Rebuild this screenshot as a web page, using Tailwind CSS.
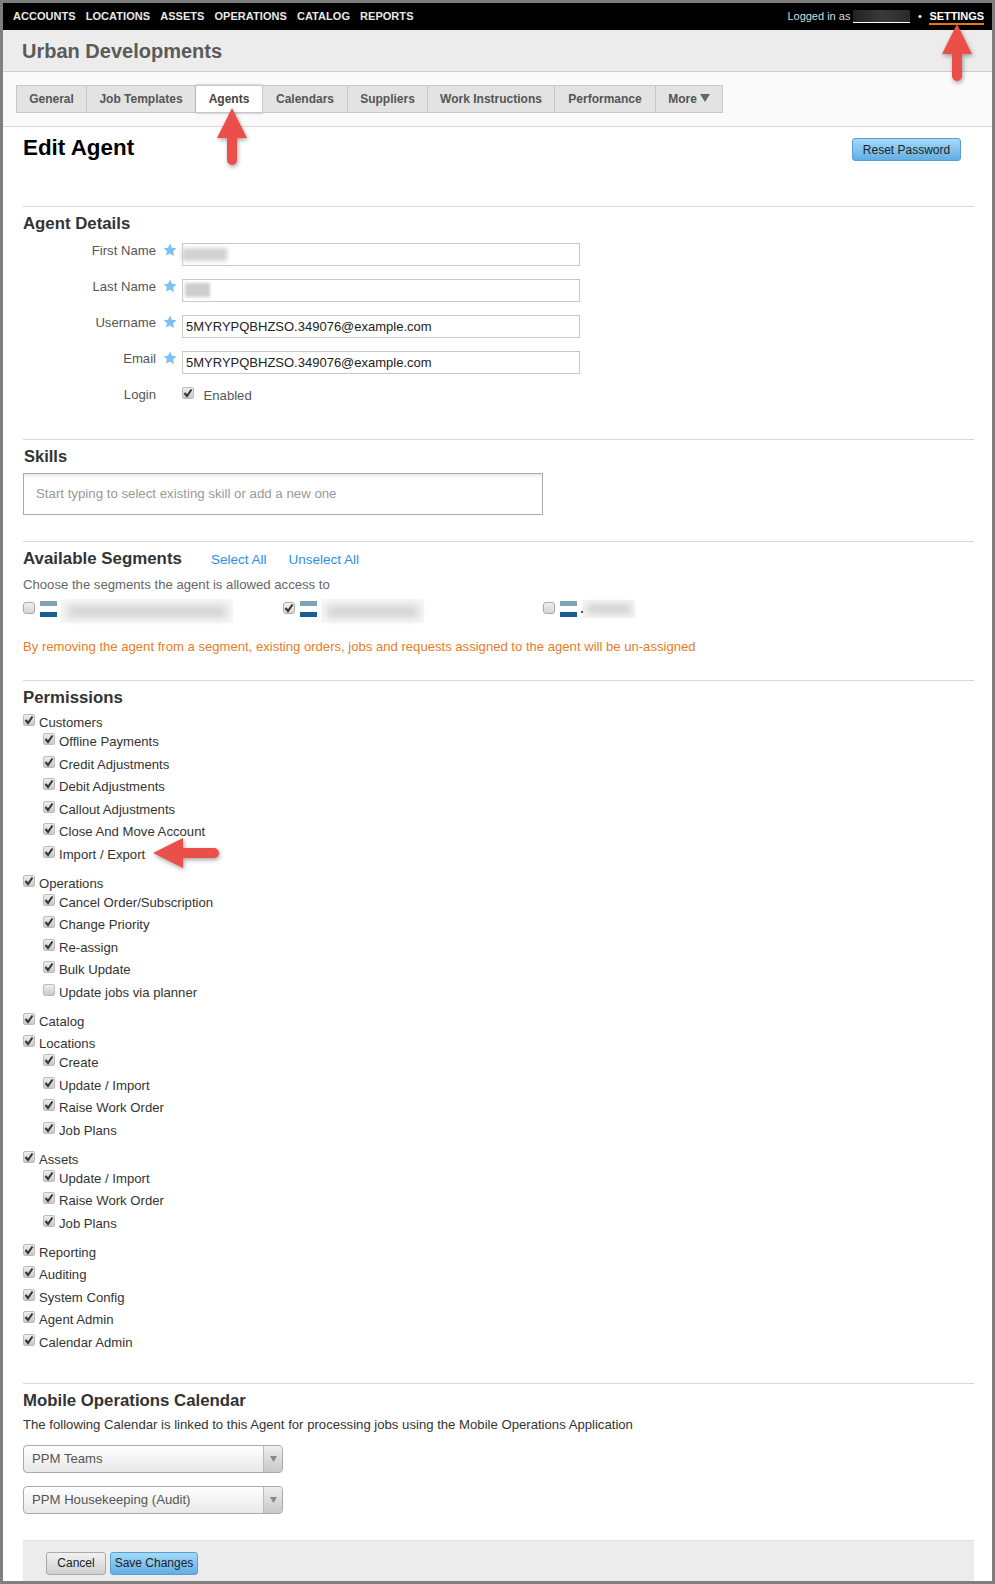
<!DOCTYPE html>
<html lang="en">
<head>
    <meta charset="UTF-8">
    <title>Edit Agent</title>
    <script src="https://cdn.jsdelivr.net/npm/@tailwindcss/browser@4"></script>
</head>
<body class="bg-white font-['Liberation_Sans',Arial,sans-serif] text-[13.15px] text-[#444]">
<div class="relative w-[995px] h-[1584px] border-[3px] border-[#7f7f7f] bg-white overflow-hidden">

    <!-- Top bar -->
    <div class="flex items-center justify-between h-[27px] bg-black pl-[10px] pr-[8px] text-[11px] text-[#e8e8e8]">
        <div class="flex gap-[10px] font-bold tracking-[0.05px]">
            <span>ACCOUNTS</span><span>LOCATIONS</span><span>ASSETS</span><span>OPERATIONS</span><span>CATALOG</span><span>REPORTS</span>
        </div>
        <div class="flex items-center">
            <span class="text-[#ddd]">Logged in as</span>
            <span class="ml-[3px] w-[57px] h-[13px] bg-gradient-to-r from-[#222] via-[#3a3a3a] to-[#2a2a2a] border-b border-white"></span>
            <span class="w-[19px] text-center text-white">•</span>
            <span class="font-bold text-white border-b-2 border-[#e07b10] leading-[14px] h-[16px] tracking-[-0.05px]">SETTINGS</span>
        </div>
    </div>

    <!-- Company header -->
    <div class="h-[42px] bg-[#ececec] border-b border-[#cfcfcf] pl-[19px] flex items-center">
        <span class="text-[20px] font-bold text-[#5a5a5a]">Urban Developments</span>
    </div>

    <!-- Tabs -->
    <div class="h-[55px] bg-[#fafafa] border-b border-[#dcdcdc] pl-[13px] pt-[13px]">
        <div class="flex h-[28px] text-[12px] font-bold text-[#555]">
            <a class="flex items-center justify-center w-[71px] bg-[#e3e3e3] border border-[#c8c8c8]">General</a>
            <a class="flex items-center justify-center w-[109px] bg-[#e3e3e3] border border-l-0 border-[#c8c8c8]">Job Templates</a>
            <a class="flex items-center justify-center w-[67px] bg-white border border-l-0 border-[#c8c8c8] shadow-[0_0_2px_#999] text-[#444]">Agents</a>
            <a class="flex items-center justify-center w-[85px] bg-[#e3e3e3] border border-l-0 border-[#c8c8c8]">Calendars</a>
            <a class="flex items-center justify-center w-[80px] bg-[#e3e3e3] border border-l-0 border-[#c8c8c8]">Suppliers</a>
            <a class="flex items-center justify-center w-[127px] bg-[#e3e3e3] border border-l-0 border-[#c8c8c8]">Work Instructions</a>
            <a class="flex items-center justify-center w-[101px] bg-[#e3e3e3] border border-l-0 border-[#c8c8c8]">Performance</a>
            <a class="flex items-center justify-center w-[67px] bg-[#e3e3e3] border border-l-0 border-[#c8c8c8]">More
                <svg class="ml-[3px] mb-[2px]" width="10" height="8" viewBox="0 0 10 8"><path d="M0 0h10L5 8z" fill="#666"/></svg>
            </a>
        </div>
    </div>

    <!-- Content -->
    <div class="pl-[20px] pr-[18px]">
        <div class="flex justify-between h-[79px]">
            <h1 class="text-[22.4px] font-bold text-black mt-[5px] leading-[32px]">Edit Agent</h1>
            <button class="mt-[11px] mr-[13px] w-[109px] h-[23px] pt-[1px] rounded-[3px] border border-[#5a9fd0] bg-gradient-to-b from-[#a3dafb] to-[#62aee2] text-[12px] text-[#222]">Reset Password</button>
        </div>

        <!-- Agent Details -->
        <section class="border-t border-[#d8d8d8] h-[233px]">
            <h2 class="text-[16.8px] font-bold text-[#333] mt-[7px] leading-[20px]">Agent Details</h2>
            <div class="mt-[9px] flex flex-col">
                <div class="flex h-[36px]">
                    <label class="w-[133px] -mt-[1.5px] text-right leading-[17px] text-[#555]">First Name</label>
                    <svg class="ml-[7px]" width="14" height="14" viewBox="0 0 24 24"><path d="M12 1l3.4 7.2 7.6 1-5.6 5.4 1.4 7.9L12 17.8l-6.8 3.7 1.4-7.9L1 9.2l7.6-1z" fill="#7cc0f5"/></svg>
                    <div class="relative ml-[5px] w-[398px] h-[23px] border border-[#c8c8c8] bg-white">
                        <div class="absolute -left-[1px] top-[4px] w-[45px] h-[13px] bg-[#d2d2d2] blur-[2px]"></div>
                    </div>
                </div>
                <div class="flex h-[36px]">
                    <label class="w-[133px] -mt-[1.5px] text-right leading-[17px] text-[#555]">Last Name</label>
                    <svg class="ml-[7px]" width="14" height="14" viewBox="0 0 24 24"><path d="M12 1l3.4 7.2 7.6 1-5.6 5.4 1.4 7.9L12 17.8l-6.8 3.7 1.4-7.9L1 9.2l7.6-1z" fill="#7cc0f5"/></svg>
                    <div class="relative ml-[5px] w-[398px] h-[23px] border border-[#c8c8c8] bg-white">
                        <div class="absolute left-[2px] top-[3px] w-[25px] h-[14px] bg-[#cdcdcd] blur-[1.5px]"></div>
                    </div>
                </div>
                <div class="flex h-[36px]">
                    <label class="w-[133px] -mt-[1.5px] text-right leading-[17px] text-[#555]">Username</label>
                    <svg class="ml-[7px]" width="14" height="14" viewBox="0 0 24 24"><path d="M12 1l3.4 7.2 7.6 1-5.6 5.4 1.4 7.9L12 17.8l-6.8 3.7 1.4-7.9L1 9.2l7.6-1z" fill="#7cc0f5"/></svg>
                    <div class="ml-[5px] w-[398px] h-[23px] border border-[#c8c8c8] bg-white pl-[3px] leading-[21px] text-[13px] text-[#222]">5MYRYPQBHZSO.349076@example.com</div>
                </div>
                <div class="flex h-[35px]">
                    <label class="w-[133px] -mt-[1.5px] text-right leading-[17px] text-[#555]">Email</label>
                    <svg class="ml-[7px]" width="14" height="14" viewBox="0 0 24 24"><path d="M12 1l3.4 7.2 7.6 1-5.6 5.4 1.4 7.9L12 17.8l-6.8 3.7 1.4-7.9L1 9.2l7.6-1z" fill="#7cc0f5"/></svg>
                    <div class="ml-[5px] w-[398px] h-[23px] border border-[#c8c8c8] bg-white pl-[3px] leading-[21px] text-[13px] text-[#222]">5MYRYPQBHZSO.349076@example.com</div>
                </div>
                <div class="flex h-[20px]">
                    <label class="w-[133px] text-right leading-[17px] text-[#555]">Login</label>
                    <span class="ml-[26px] mt-[1px] w-[12px] h-[12px] rounded-[2px] bg-gradient-to-b from-[#eee] to-[#c9c9c9] border border-[#bbb] flex items-center justify-center"><svg width="10" height="10" viewBox="0 0 10 10"><path d="M1.5 5l2.5 3L8.5 1.5" fill="none" stroke="#333" stroke-width="2"/></svg></span>
                    <span class="ml-[9.5px] leading-[19px] text-[#555]">Enabled</span>
                </div>
            </div>
        </section>

        <!-- Skills -->
        <section class="border-t border-[#d8d8d8] h-[102px]">
            <h2 class="text-[16.5px] font-bold text-[#333] mt-[6px] ml-[1px] leading-[20px]">Skills</h2>
            <div class="mt-[7px] w-[520px] h-[42px] border border-[#aaa] pl-[12px] leading-[40px] text-[13.25px] text-[#999] shadow-[inset_0_4px_4px_-3px_#ddd]">Start typing to select existing skill or add a new one</div>
        </section>

        <!-- Segments -->
        <section class="border-t border-[#d8d8d8] h-[139px]">
            <div class="flex items-baseline mt-[7px] h-[22px]">
                <h2 class="text-[16.9px] font-bold text-[#333] leading-[20px]">Available Segments</h2>
                <a class="ml-[29px] text-[13.5px] text-[#2b8fe8]">Select All</a>
                <a class="ml-[22px] text-[13.5px] text-[#2b8fe8]">Unselect All</a>
            </div>
            <p class="mt-[5px] text-[#666] leading-[18px]">Choose the segments the agent is allowed access to</p>
            <div class="flex mt-[5px] h-[24px]">
                <div class="flex items-start w-[260px]">
                    <span class="mt-[3px] w-[12px] h-[12px] rounded-[3px] bg-gradient-to-b from-[#f0f0f0] to-[#d6d6d6] border border-[#aaa]"></span>
                    <span class="ml-[5px] mt-[2px] w-[17px] h-[16px] border-t-[5px] border-b-[5px] border-t-[#7ea3b4] border-b-[#185f93] bg-white"></span>
                    <span class="ml-[4px] w-[172px] h-[24px] bg-[#f7f7f7] flex items-center justify-center"><span class="w-[160px] h-[13px] bg-[#d4d4d4] blur-[4px]"></span></span>
                </div>
                <div class="flex items-start w-[260px]">
                    <span class="mt-[3px] w-[12px] h-[12px] rounded-[3px] bg-gradient-to-b from-[#f0f0f0] to-[#d6d6d6] border border-[#aaa] flex items-center justify-center"><svg width="10" height="10" viewBox="0 0 10 10"><path d="M1.5 5l2.5 3L8.5 1.5" fill="none" stroke="#333" stroke-width="2"/></svg></span>
                    <span class="ml-[5px] mt-[2px] w-[17px] h-[16px] border-t-[5px] border-b-[5px] border-t-[#7ea3b4] border-b-[#185f93] bg-white"></span>
                    <span class="ml-[4px] w-[103px] h-[24px] bg-[#f7f7f7] flex items-center justify-center"><span class="w-[92px] h-[13px] bg-[#d4d4d4] blur-[4px]"></span></span>
                </div>
                <div class="flex items-start">
                    <span class="mt-[3px] w-[12px] h-[12px] rounded-[3px] bg-gradient-to-b from-[#f0f0f0] to-[#d6d6d6] border border-[#aaa]"></span>
                    <span class="ml-[5px] mt-[2px] w-[17px] h-[16px] border-t-[5px] border-b-[5px] border-t-[#7ea3b4] border-b-[#185f93] bg-white"></span>
                    <span class="relative ml-[5px] mt-[1px] w-[53px] h-[18px] bg-[#f4f4f4] flex items-center justify-center"><span class="w-[44px] h-[10px] bg-[#d4d4d4] blur-[3px]"></span><span class="absolute -left-[1px] top-[11px] w-[2px] h-[2px] bg-[#555]"></span></span>
                </div>
            </div>
            <p class="mt-[15px] text-[13.1px] text-[#e87d26] leading-[18px]">By removing the agent from a segment, existing orders, jobs and requests assigned to the agent will be un-assigned</p>
        </section>

        <!-- Permissions -->
        <section class="border-t border-[#d8d8d8] h-[703px]">
            <h2 class="text-[16.8px] font-bold text-[#333] mt-[7px] leading-[20px]">Permissions</h2>
            <div id="perms" class="mt-[6px] text-[#333]"></div>
        </section>

        <!-- Mobile Operations Calendar -->
        <section class="border-t border-[#d8d8d8] h-[157px]">
            <h2 class="text-[16.8px] font-bold text-[#333] mt-[7px] leading-[20px]">Mobile Operations Calendar</h2>
            <p class="mt-[5px] leading-[18px] text-[#333]">The following Calendar is linked to this Agent for processing jobs using the Mobile Operations Application</p>
            <div class="mt-[11px] flex w-[260px] h-[28px] rounded-[4px] border border-[#aaa] bg-gradient-to-b from-white to-[#e8e8e8]">
                <span class="flex-1 pl-[8px] leading-[26px] text-[#555]">PPM Teams</span>
                <span class="w-[19px] border-l border-[#bbb] bg-gradient-to-b from-[#eee] to-[#c8c8c8] rounded-r-[4px] flex items-center justify-center"><svg width="7" height="6" viewBox="0 0 7 6"><path d="M0 0h7L3.5 6z" fill="#888"/></svg></span>
            </div>
            <div class="mt-[13px] flex w-[260px] h-[28px] rounded-[4px] border border-[#aaa] bg-gradient-to-b from-white to-[#e8e8e8]">
                <span class="flex-1 pl-[8px] leading-[26px] text-[#555]">PPM Housekeeping (Audit)</span>
                <span class="w-[19px] border-l border-[#bbb] bg-gradient-to-b from-[#eee] to-[#c8c8c8] rounded-r-[4px] flex items-center justify-center"><svg width="7" height="6" viewBox="0 0 7 6"><path d="M0 0h7L3.5 6z" fill="#888"/></svg></span>
            </div>
        </section>

        <!-- Footer buttons -->
        <div class="flex items-center h-[41px] bg-[#ececec] border-t border-[#e0e0e0] pl-[23px] pt-[4px]">
            <button class="w-[60px] h-[23px] rounded-[3px] border border-[#aaa] bg-gradient-to-b from-[#f2f2f2] to-[#cfcfcf] text-[12px] text-[#222]">Cancel</button>
            <button class="ml-[4px] w-[88px] h-[23px] rounded-[3px] border border-[#5a9fd0] bg-gradient-to-b from-[#a3dafb] to-[#62aee2] text-[12px] text-[#222]">Save Changes</button>
        </div>
    </div>

    <!-- Annotation arrows -->
    <svg class="absolute left-[214px] top-[105px] drop-shadow-[1px_2px_2px_rgba(0,0,0,0.35)]" width="30" height="57" viewBox="0 0 30 57"><path d="M15 0L30 30H20V52a5 5 0 0 1-10 0V30H0z" fill="#ea4f4a"/></svg>
    <svg class="absolute left-[939px] top-[21px] drop-shadow-[1px_2px_2px_rgba(0,0,0,0.35)]" width="30" height="57" viewBox="0 0 30 57"><path d="M15 0L30 30H20V52a5 5 0 0 1-10 0V30H0z" fill="#ea4f4a"/></svg>
    <svg class="absolute left-[150px] top-[835px] drop-shadow-[1px_2px_2px_rgba(0,0,0,0.35)]" width="66" height="30" viewBox="0 0 66 30"><path d="M0 15L30 0V10H61a5 5 0 0 1 0 10H30V30z" fill="#ea4f4a"/></svg>
</div>

<script>
    // Permission tree, top level items with optional children
    const perms = [
        { name: "Customers", kids: ["Offline Payments", "Credit Adjustments", "Debit Adjustments", "Callout Adjustments", "Close And Move Account", "Import / Export"] },
        { name: "Operations", kids: ["Cancel Order/Subscription", "Change Priority", "Re-assign", "Bulk Update", "!Update jobs via planner"] },
        { name: "Catalog" },
        { name: "Locations", kids: ["Create", "Update / Import", "Raise Work Order", "Job Plans"] },
        { name: "Assets", kids: ["Update / Import", "Raise Work Order", "Job Plans"] },
        { name: "Reporting" },
        { name: "Auditing" },
        { name: "System Config" },
        { name: "Agent Admin" },
        { name: "Calendar Admin" }
    ];

    const tick = '<svg width="10" height="10" viewBox="0 0 10 10"><path d="M1.5 5l2.5 3L8.5 1.5" fill="none" stroke="#333" stroke-width="2"/></svg>';
    const box = checked => `<span class="w-[12px] h-[12px] rounded-[2px] bg-gradient-to-b from-[#eee] to-[#c9c9c9] border border-[#bbb] flex items-center justify-center">${checked ? tick : ''}</span>`;

    let html = '';
    perms.forEach(p => {
        const hasKids = !!p.kids;
        html += `<div class="flex ${hasKids ? 'h-[19px]' : 'h-[22.5px]'}">${box(true)}<span class="ml-[4px] leading-[17.5px]">${p.name}</span></div>`;
        if (hasKids) {
            html += '<div class="pl-[20px] mb-[6.5px]">';
            p.kids.forEach(k => {
                const off = k.startsWith('!');
                html += `<div class="flex h-[22.5px]">${box(!off)}<span class="ml-[4px] leading-[17.5px]">${off ? k.slice(1) : k}</span></div>`;
            });
            html += '</div>';
        }
    });
    document.getElementById('perms').innerHTML = html;
</script>
</body>
</html>
